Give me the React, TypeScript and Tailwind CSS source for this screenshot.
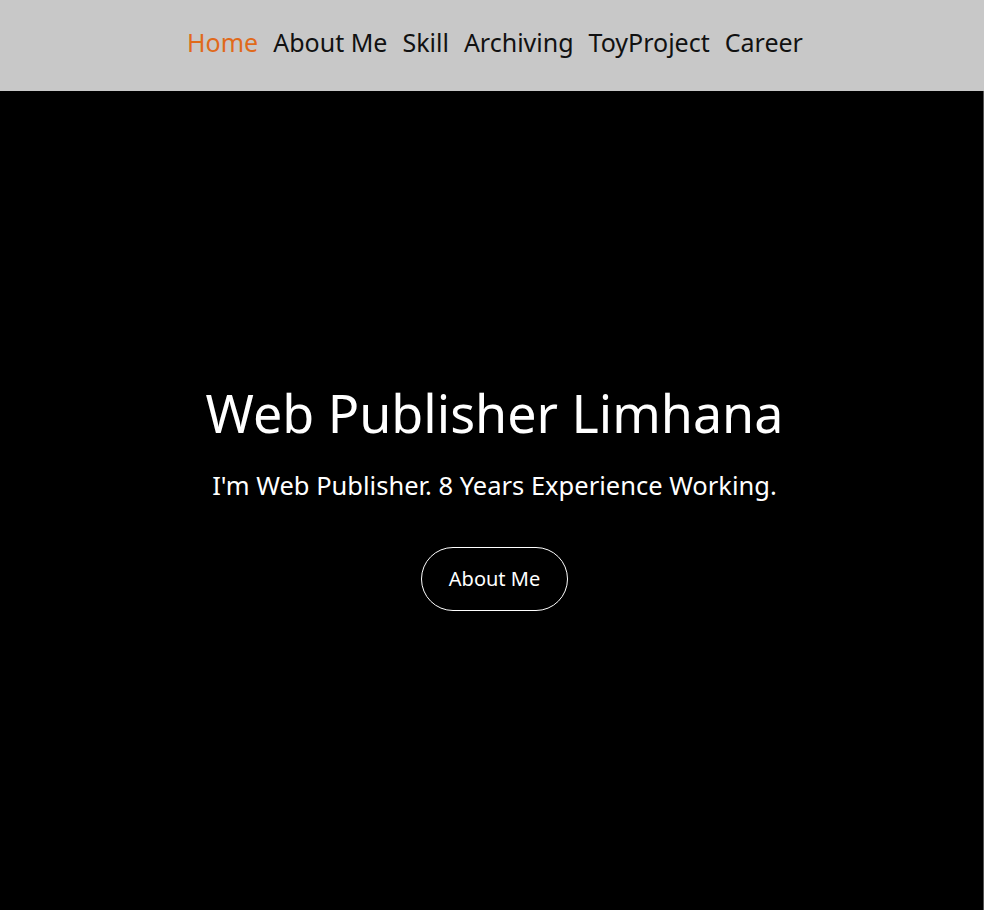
import React from "react";

export default function App() {
  const items = ["Home", "About Me", "Skill", "Archiving", "ToyProject", "Career"];
  return (
    <div
      className="flex h-[910px] flex-col overflow-hidden"
      style={{ fontFamily: '"Noto Sans", "Noto Sans CJK KR", sans-serif' }}
    >
      <header className="flex h-[91px] shrink-0 items-center justify-center bg-[#c8c8c8] pb-[5px] pl-[6px]">
        <nav className="flex gap-[15px] text-[25px] text-[#111]">
          {items.map((it, i) => (
            <a key={it} className={i === 0 ? "text-[#e06a1b]" : ""}>
              {it}
            </a>
          ))}
        </nav>
      </header>
      <main className="flex flex-1 flex-col items-center justify-center border-r border-[#555] bg-black pb-[3px] pl-[6px] text-white">
        <h1 className="text-[52px] leading-none">Web Publisher Limhana</h1>
        <p className="mt-[34px] text-[25.5px] leading-none">
          I'm Web Publisher. 8 Years Experience Working.
        </p>
        <button className="mt-[49px] h-[64px] w-[147px] rounded-full border border-white text-[20px]">
          About Me
        </button>
      </main>
    </div>
  );
}
